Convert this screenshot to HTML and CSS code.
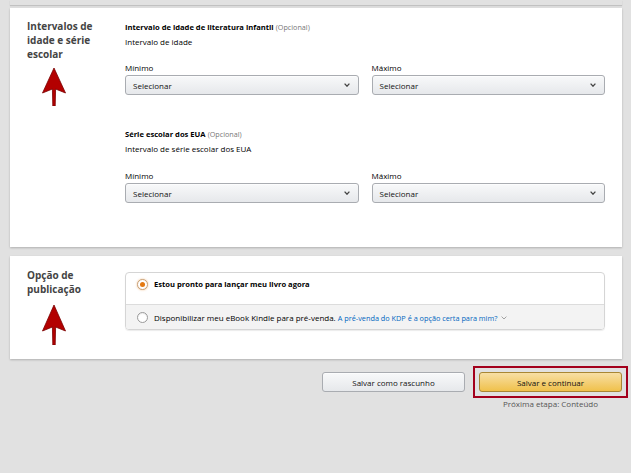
FILE: index.html
```html
<!DOCTYPE html>
<html lang="pt-BR">
<head>
<meta charset="utf-8">
<title>KDP</title>
<link rel="stylesheet" href="styles.css">
</head>
<body>
<div class="page">
  <div class="topstrip"></div>

  <section class="card card-age">
    <div class="side">
      <h2 class="side-title">Intervalos de<br>idade e série<br>escolar</h2>
      <svg class="arrow" width="24" height="38" viewBox="0 0 24 38" aria-hidden="true">
        <path d="M12 0 L23.5 25 L13.6 21 L13.2 38 L10.8 38 L10.4 21 L0.5 25 Z" fill="#b30000" stroke="#7a0000" stroke-width="0.8" stroke-linejoin="round"/>
      </svg>
    </div>
    <div class="main">
      <div class="group">
        <div class="title"><span class="strong">Intervalo de idade de literatura infantil</span> <span class="opt">(Opcional)</span></div>
        <div class="sub">Intervalo de idade</div>
        <div class="pair">
          <div class="field">
            <div class="lbl">Mínimo</div>
            <div class="select"><span>Selecionar</span><svg class="chev" width="6" height="4" viewBox="0 0 6 4"><path d="M0.6 0.6 L3 3.2 L5.4 0.6" fill="none" stroke="#444" stroke-width="1.3"/></svg></div>
          </div>
          <div class="field">
            <div class="lbl">Máximo</div>
            <div class="select"><span>Selecionar</span><svg class="chev" width="6" height="4" viewBox="0 0 6 4"><path d="M0.6 0.6 L3 3.2 L5.4 0.6" fill="none" stroke="#444" stroke-width="1.3"/></svg></div>
          </div>
        </div>
      </div>

      <div class="group group-2">
        <div class="title"><span class="strong">Série escolar dos EUA</span> <span class="opt">(Opcional)</span></div>
        <div class="sub">Intervalo de série escolar dos EUA</div>
        <div class="pair">
          <div class="field">
            <div class="lbl">Mínimo</div>
            <div class="select"><span>Selecionar</span><svg class="chev" width="6" height="4" viewBox="0 0 6 4"><path d="M0.6 0.6 L3 3.2 L5.4 0.6" fill="none" stroke="#444" stroke-width="1.3"/></svg></div>
          </div>
          <div class="field">
            <div class="lbl">Máximo</div>
            <div class="select"><span>Selecionar</span><svg class="chev" width="6" height="4" viewBox="0 0 6 4"><path d="M0.6 0.6 L3 3.2 L5.4 0.6" fill="none" stroke="#444" stroke-width="1.3"/></svg></div>
          </div>
        </div>
      </div>
    </div>
  </section>

  <section class="card card-pub">
    <div class="side">
      <h2 class="side-title">Opção de<br>publicação</h2>
      <svg class="arrow arrow-2" width="24" height="40" viewBox="0 0 24 40" aria-hidden="true">
        <path d="M12 0 L23.5 26 L13.6 22 L13.2 40 L10.8 40 L10.4 22 L0.5 26 Z" fill="#b30000" stroke="#7a0000" stroke-width="0.8" stroke-linejoin="round"/>
      </svg>
    </div>
    <div class="main">
      <div class="radios">
        <div class="radio-row row-1">
          <span class="radio checked"></span>
          <span class="strong">Estou pronto para lançar meu livro agora</span>
        </div>
        <div class="radio-row row-2">
          <span class="radio"></span>
          <span>Disponibilizar meu eBook Kindle para pré-venda. <span class="link">A pré-venda do KDP é a opção certa para mim?</span> <svg class="link-chev" width="6" height="4" viewBox="0 0 6 4"><path d="M0.6 0.6 L3 3 L5.4 0.6" fill="none" stroke="#999" stroke-width="0.9"/></svg></span>
        </div>
      </div>
    </div>
  </section>

  <div class="actions">
    <button class="btn btn-draft">Salvar como rascunho</button>
    <div class="primary-wrap">
      <div class="highlight">
        <button class="btn btn-primary">Salvar e continuar</button>
      </div>
      <div class="next">Próxima etapa: Conteúdo</div>
    </div>
  </div>
</div>
</body>
</html>
```

FILE: styles.css
```css
* { box-sizing: border-box; }

html, body {
  margin: 0;
  height: 100%;
}

body {
  background: #e1e1e1;
  font-family: "Open Sans", "DejaVu Sans", sans-serif;
  font-size: 8px;
  color: #000;
}

.topstrip {
  height: 5px;
  margin: 0 9px 3px 10px;
  box-shadow: 0 1px 1px rgba(0, 0, 0, 0.14);
}

.card {
  background: #fff;
  display: grid;
  grid-template-columns: 98px 1fr;
  margin: 0 9px 0 10px;
  padding: 11px 16px 0 17px;
  box-shadow: 0 1px 2px rgba(0, 0, 0, 0.22);
}

.card-age { height: 239px; }

.card-pub {
  height: 103px;
  margin-top: 9px;
  padding-top: 12px;
}

.side-title {
  margin: 0;
  font-size: 10px;
  line-height: 14px;
  font-weight: 700;
  color: #444;
}

.arrow {
  display: block;
  margin: 7px 0 0 15px;
}

.arrow-2 { margin-top: 9px; }

.main { padding-top: 1px; }
.card-pub .main { padding-top: 4px; }

.title, .sub, .lbl {
  line-height: 14px;
  white-space: nowrap;
}

.title .strong { font-size: 7.6px; }

.sub { margin-top: 1px; }

.strong { font-weight: 700; }

.opt {
  font-size: 7.2px;
  color: #777;
}

.lbl { margin-top: 12px; }

.group-2 { margin-top: 32px; }
.group-2 .lbl { margin-top: 13px; }

.pair {
  display: grid;
  grid-template-columns: 1fr 1fr;
  column-gap: 13px;
  padding-right: 1px;
}

.select {
  height: 20px;
  display: flex;
  align-items: center;
  justify-content: space-between;
  padding: 0 8px 0 7px;
  border: 1px solid #a9acb1;
  border-radius: 3px;
  background: linear-gradient(#f8f9fa, #e6e8eb);
  box-shadow: 0 1px 0 rgba(255, 255, 255, 0.6) inset;
  color: #111;
}

.chev { display: block; }

.radios {
  border: 1px solid #d5d5d5;
  border-radius: 4px;
  box-shadow: 0 1px 1px rgba(0, 0, 0, 0.08);
  overflow: hidden;
  margin-right: 1px;
}

.radio-row {
  display: flex;
  align-items: center;
  gap: 6px;
  padding-left: 11px;
  white-space: nowrap;
}

.row-1 {
  height: 31px;
  align-items: flex-start;
  padding-top: 6px;
}

.row-1 .strong {
  font-size: 7.6px;
  line-height: 11px;
}

.row-2 {
  height: 25px;
  background: #f3f3f3;
  border-top: 1px solid #dcdcdc;
}

.radio {
  width: 11px;
  height: 11px;
  flex: none;
  border-radius: 50%;
  border: 1px solid #9a9a9a;
  background: #fff;
  box-shadow: 0 1px 1px rgba(0, 0, 0, 0.08) inset;
  display: flex;
  align-items: center;
  justify-content: center;
}

.radio.checked {
  border-color: #c8a27a;
  box-shadow: 0 0 2px rgba(228, 121, 17, 0.5);
}

.radio.checked::after {
  content: "";
  width: 5px;
  height: 5px;
  border-radius: 50%;
  background: #e47911;
}

.link {
  color: #0066c0;
  font-size: 7.3px;
}

.link-chev {
  display: inline-block;
  vertical-align: middle;
  margin-left: 2px;
}

.actions {
  display: flex;
  justify-content: flex-end;
  align-items: flex-start;
  gap: 8px;
  margin-top: 7px;
  padding-right: 3px;
}

.btn {
  width: 143px;
  height: 20px;
  border-radius: 3px;
  font-family: inherit;
  font-size: 8px;
  color: #111;
  padding: 0;
  cursor: pointer;
}

.btn-draft {
  margin-top: 6px;
  border: 1px solid #a9acb1;
  background: linear-gradient(#f8f9fa, #e6e8eb);
  box-shadow: 0 1px 0 rgba(255, 255, 255, 0.6) inset;
}

.primary-wrap {
  display: flex;
  flex-direction: column;
  align-items: center;
}

.highlight {
  border: 2px solid #a3001c;
  padding: 4px;
}

.btn-primary {
  display: block;
  border: 1px solid #a88734;
  background: linear-gradient(#f7dfa5, #f0c14b);
}

.next {
  line-height: 12px;
  color: #555;
}
```
